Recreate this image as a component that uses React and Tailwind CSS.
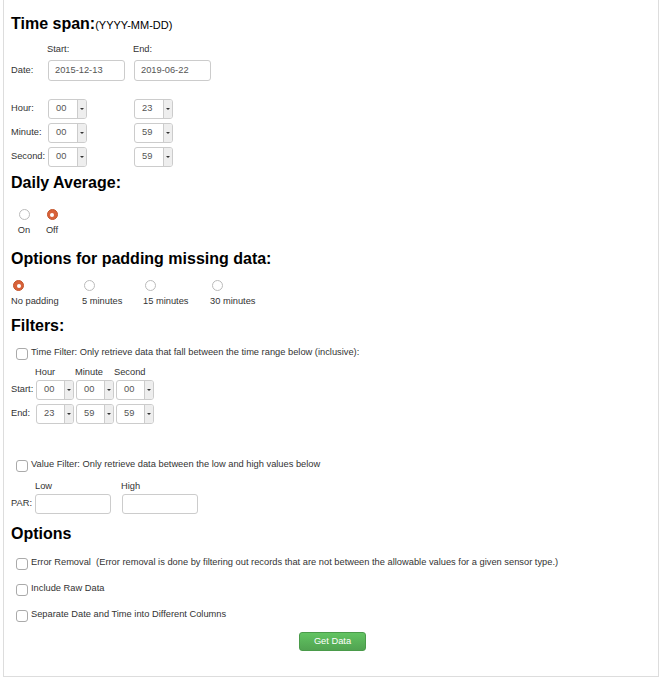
import React from 'react';

const font = { fontFamily: '"Liberation Sans", Arial, sans-serif' };

const Heading = ({ children, className = '' }) => (
  <h2 className={`text-[16px] font-bold leading-[22px] text-black ${className}`}>{children}</h2>
);

const Select = ({ value, w = 'w-[39px]' }) => (
  <div className={`flex h-[20px] ${w} border border-[#ccc] rounded-[3px] bg-white overflow-hidden`}>
    <div className="flex-1 flex items-center pl-[7px] text-[9.3px] text-[#555]">{value}</div>
    <div className="w-[9px] border-l border-[#ccc] bg-[#eee] flex items-center justify-center">
      <div className="w-0 h-0 border-l-[2px] border-r-[2px] border-t-[2px] border-l-transparent border-r-transparent border-t-[#333]" />
    </div>
  </div>
);

const TextBox = ({ value = '', w = 'w-[77px]', h = 'h-[21px]' }) => (
  <div className={`flex items-center ${w} ${h} border border-[#ccc] rounded-[3px] bg-white pl-[6px] text-[9.3px] text-[#555]`}>
    {value}
  </div>
);

const Radio = ({ checked }) =>
  checked ? (
    <div className="w-[11px] h-[11px] rounded-full bg-[#d8623a] border border-[#c4552b] flex items-center justify-center">
      <div className="w-[4px] h-[4px] rounded-full bg-white" />
    </div>
  ) : (
    <div className="w-[11px] h-[11px] rounded-full bg-white border border-[#bbb]" />
  );

const Checkbox = () => (
  <div className="w-[12px] h-[12px] shrink-0 rounded-[3px] border border-[#aaa] bg-white" />
);

const CheckRow = ({ children, className = '' }) => (
  <div className={`flex items-start ml-[5px] ${className}`}>
    <div className="mt-[1px]"><Checkbox /></div>
    <span className="ml-[3px] text-[9.3px] leading-[10px] text-[#333]">{children}</span>
  </div>
);

export default function App() {
  return (
    <div style={font} className="bg-white w-[661px] h-[678px]">
      <div className="ml-[3px] w-[656px] h-[677px] border-x border-b border-[#ddd] pl-[7px] pt-[13px] text-[#333] text-[9.3px]">
        {/* Time span */}
        <Heading>
          Time span:<span className="text-[11px] font-normal">(YYYY-MM-DD)</span>
        </Heading>

        <div className="flex mt-[8px] leading-[11px]">
          <div className="w-[36px]" />
          <div className="w-[86px]">Start:</div>
          <div>End:</div>
        </div>

        <div className="flex items-center mt-[5px]">
          <div className="w-[37px]">Date:</div>
          <div className="w-[86px]"><TextBox value="2015-12-13" /></div>
          <TextBox value="2019-06-22" />
        </div>

        <div className="flex flex-col gap-[4px] mt-[18px]">
          {[
            ['Hour:', '00', '23'],
            ['Minute:', '00', '59'],
            ['Second:', '00', '59'],
          ].map(([label, a, b]) => (
            <div key={label} className="flex items-center">
              <div className="w-[37px]">{label}</div>
              <div className="w-[86px]"><Select value={a} /></div>
              <Select value={b} />
            </div>
          ))}
        </div>

        {/* Daily average */}
        <Heading className="mt-[5px]">Daily Average:</Heading>
        <div className="flex gap-[14px] ml-[6px] mt-[15px]">
          <div className="flex flex-col items-center w-[14px]">
            <Radio />
            <span className="leading-[10px] mt-[5px]">On</span>
          </div>
          <div className="flex flex-col items-center w-[14px]">
            <Radio checked />
            <span className="leading-[10px] mt-[5px]">Off</span>
          </div>
        </div>

        {/* Padding */}
        <Heading className="mt-[13px]">Options for padding missing data:</Heading>
        <div className="flex mt-[10px] ml-[1px]">
          {[
            ['No padding', true, 'w-[71px]'],
            ['5 minutes', false, 'w-[61px]'],
            ['15 minutes', false, 'w-[67px]'],
            ['30 minutes', false, 'w-[70px]'],
          ].map(([label, checked, w]) => (
            <div key={label} className={`flex flex-col ${w}`}>
              <div className="ml-[1px]"><Radio checked={checked} /></div>
              <span className="leading-[10px] mt-[5px] -ml-[1px]">{label}</span>
            </div>
          ))}
        </div>

        {/* Filters */}
        <Heading className="mt-[9px]">Filters:</Heading>
        <CheckRow className="mt-[10px]">
          Time Filter: Only retrieve data that fall between the time range below (inclusive):
        </CheckRow>

        <div className="flex mt-[7px] leading-[10px]">
          <div className="w-[24px]" />
          <div className="w-[40px]">Hour</div>
          <div className="w-[39px]">Minute</div>
          <div>Second</div>
        </div>
        <div className="flex flex-col gap-[4px] mt-[3px]">
          {[
            ['Start:', '00', '00', '00'],
            ['End:', '23', '59', '59'],
          ].map(([label, h, m, s]) => (
            <div key={label} className="flex items-center gap-[2px]">
              <div className="w-[23px]">{label}</div>
              <Select value={h} w="w-[38px]" />
              <Select value={m} w="w-[38px]" />
              <Select value={s} w="w-[38px]" />
            </div>
          ))}
        </div>

        <CheckRow className="mt-[35px]">
          Value Filter: Only retrieve data between the low and high values below
        </CheckRow>

        <div className="flex mt-[9px] leading-[10px]">
          <div className="w-[24px]" />
          <div className="w-[86px]">Low</div>
          <div>High</div>
        </div>
        <div className="flex items-center mt-[3px]">
          <div className="w-[24px]">PAR:</div>
          <div className="w-[87px]"><TextBox w="w-[76px]" h="h-[20px]" /></div>
          <TextBox w="w-[76px]" h="h-[20px]" />
        </div>

        {/* Options */}
        <Heading className="mt-[9px]">Options</Heading>
        <div className="flex flex-col gap-[13px] mt-[12px]">
          <CheckRow>
            Error Removal&nbsp;&nbsp;(Error removal is done by filtering out records that are not between the allowable values for a given sensor type.)
          </CheckRow>
          <CheckRow>Include Raw Data</CheckRow>
          <CheckRow>Separate Date and Time into Different Columns</CheckRow>
        </div>

        <div className="flex justify-center mt-[10px] pr-[4px]">
          <button className="w-[67px] h-[19px] rounded-[3px] border border-[#4a9b4a] bg-gradient-to-b from-[#62c462] to-[#51a351] text-white text-[9.3px]">
            Get Data
          </button>
        </div>
      </div>
    </div>
  );
}
